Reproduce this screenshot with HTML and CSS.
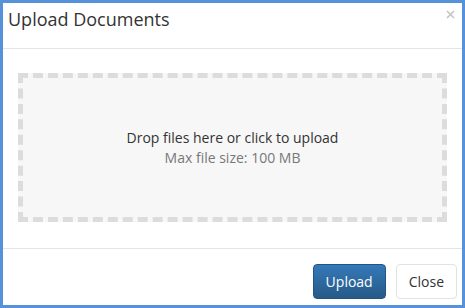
FILE: index.html
```html
<!DOCTYPE html>
<html lang="en">
<head>
    <meta charset="UTF-8">
    <meta name="viewport" content="width=device-width, initial-scale=1.0">
    <title>Upload Documents</title>
    <link rel="stylesheet" href="styles.css">
</head>
<body>
    <div class="modal">
        <header class="modal-header">
            <h4 class="modal-title">Upload Documents</h4>
            <button class="close" aria-label="Close">
                <svg width="9" height="9" viewBox="0 0 9 9">
                    <path d="M1 1 L8 8 M8 1 L1 8" stroke="#c4c4c4" stroke-width="1.6"/>
                </svg>
            </button>
        </header>

        <section class="modal-body">
            <!-- Drop area -->
            <div class="dropzone">
                <p class="dz-message">Drop files here or click to upload</p>
                <p class="dz-hint">Max file size: 100 MB</p>
            </div>
        </section>

        <footer class="modal-footer">
            <button class="btn btn-primary">Upload</button>
            <button class="btn btn-default">Close</button>
        </footer>
    </div>
</body>
</html>
```

FILE: styles.css
```css
body {
    margin: 0;
    background: #5592d9;
    font-family: "Open Sans", Arial, sans-serif;
    color: #333;
}

.modal {
    box-sizing: border-box;
    width: 465px;
    height: 308px;
    border: 3px solid #5592d9;
    background: #fff;
    display: flex;
    flex-direction: column;
}

.modal-header {
    height: 46px;
    box-sizing: border-box;
    border-bottom: 1px solid #e5e5e5;
    padding: 4px 7px 0 5px;
    display: flex;
    justify-content: space-between;
    align-items: flex-start;
}

.modal-title {
    margin: 0;
    font-size: 18px;
    font-weight: normal;
    line-height: 25px;
    color: #333;
}

.close {
    border: 0;
    background: none;
    padding: 0;
    margin-top: 3px;
    width: 9px;
    height: 9px;
    cursor: pointer;
}

.close svg {
    display: block;
}

.modal-body {
    flex: 1;
    display: flex;
    padding: 24px 15px 26px;
}

.dropzone {
    flex: 1;
    border: 5px dashed #dcdcdc;
    background: #f7f7f7;
    display: flex;
    flex-direction: column;
    justify-content: center;
    align-items: center;
    text-align: center;
}

.dropzone p {
    margin: 0;
    font-size: 14px;
    line-height: 20px;
}

.dz-message {
    color: #333;
}

.dz-hint {
    color: #777;
}

.modal-footer {
    border-top: 1px solid #e5e5e5;
    padding: 15px 5px 6px;
    display: flex;
    justify-content: flex-end;
    gap: 10px;
}

.btn {
    height: 35px;
    padding: 0 12px;
    font-family: "Open Sans", Arial, sans-serif;
    font-size: 14px;
    border-radius: 4px;
    cursor: pointer;
}

.btn-primary {
    color: #fff;
    background: linear-gradient(#3579b8, #265a88);
    border: 1px solid #245580;
}

.btn-default {
    color: #333;
    background: #fff;
    border: 1px solid #e2e2e2;
}
```
